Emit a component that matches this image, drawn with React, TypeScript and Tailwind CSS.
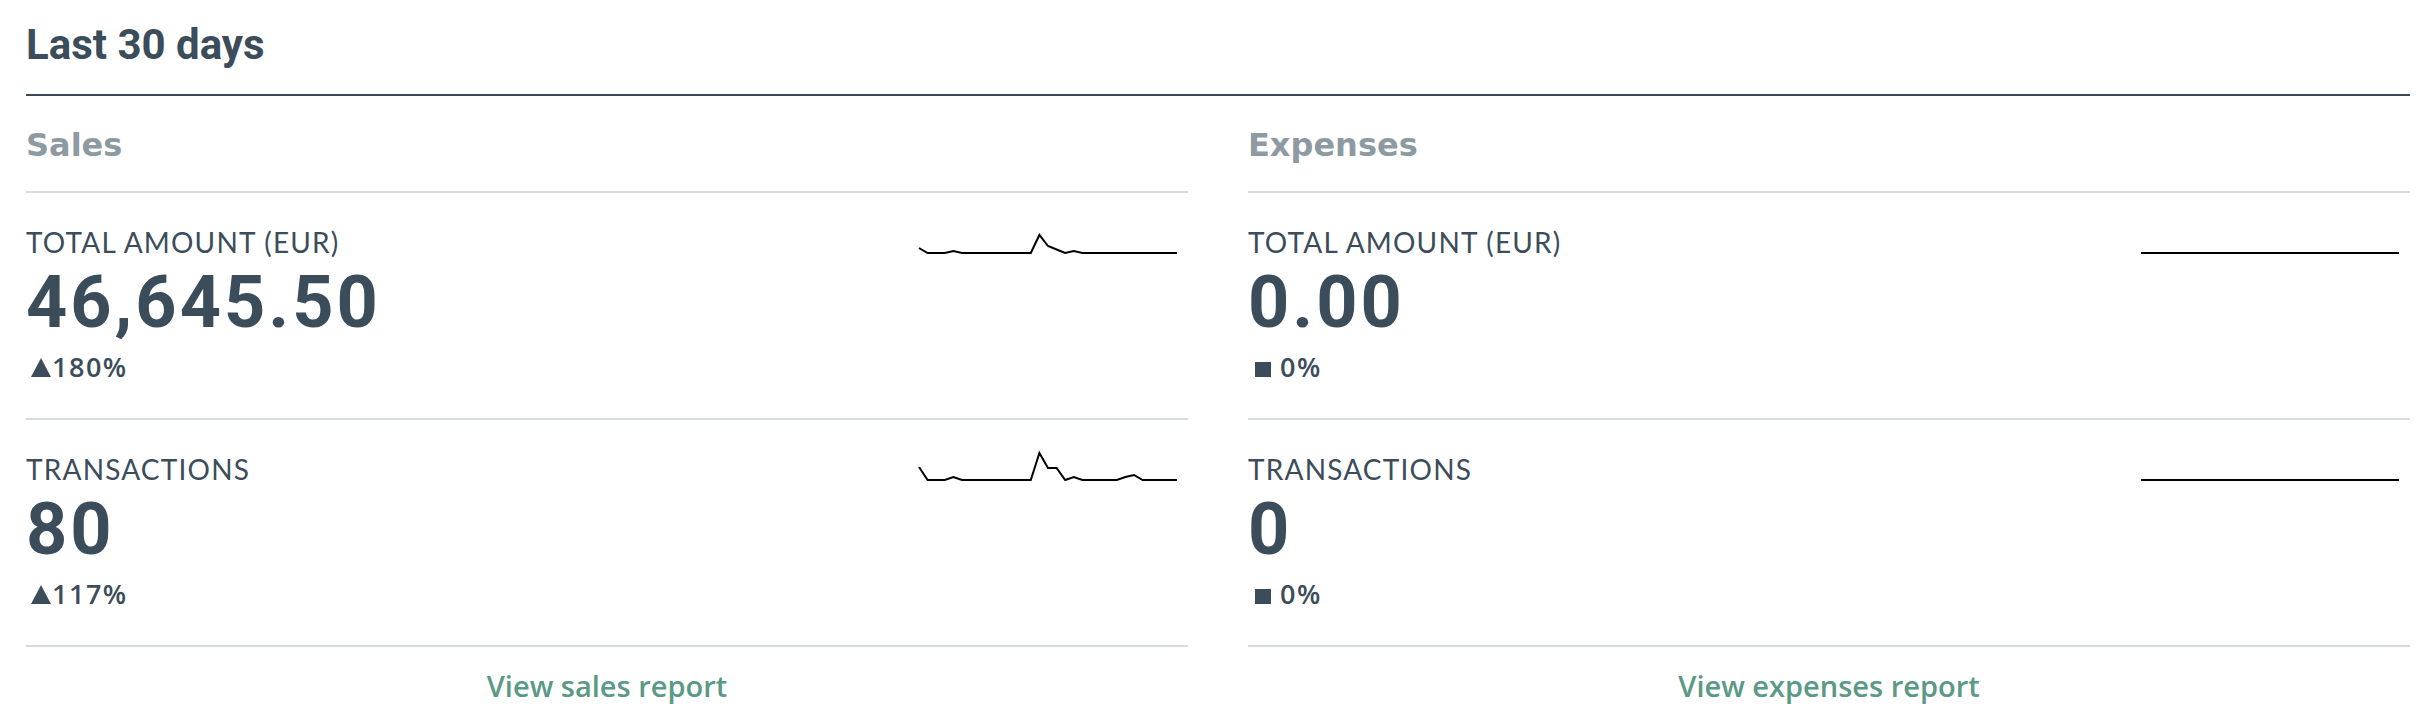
import React from "react";

const N = 31;
const W = 260;

function pts(offsets: number[]) {
  return offsets
    .map((o, i) => `${(1 + (i * (W - 2)) / (N - 1)).toFixed(2)},${30 - o}`)
    .join(" ");
}

const zeros = Array(N).fill(0);
const sales1 = [5, 0, 0, 0, 2, 0, 0, 0, 0, 0, 0, 0, 0, 0, 18, 7, 3.5, 0, 2, 0, 0, 0, 0, 0, 0, 0, 0, 0, 0, 0, 0];
const sales2 = [13, 0, 0, 0, 3, 0, 0, 0, 0, 0, 0, 0, 0, 0, 27, 12, 12, 0, 3, 0, 0, 0, 0, 0, 3, 5, 0, 0, 0, 0, 0];

function Spark({ data }: { data: number[] }) {
  return (
    <svg width={W} height="34" viewBox={`0 0 ${W} 34`} className="mr-[10px] shrink-0 block">
      <polyline points={pts(data)} fill="none" stroke="#000" strokeWidth="2" strokeLinejoin="miter" />
    </svg>
  );
}

function Indicator({ kind, text }: { kind: "up" | "flat"; text: string }) {
  return (
    <div className="mt-[14px] flex h-[27px] items-start">
      {kind === "up" ? (
        <svg width="20" height="19" viewBox="0 0 20 19" className="ml-[5px] mt-[5px] block">
          <polygon points="10,0 20,19 0,19" fill="#3b4c5a" />
        </svg>
      ) : (
        <div className="ml-[7px] mt-[9px] h-[15px] w-[16px] bg-[#3b4c5a]" />
      )}
      <span
        className={`font-['Open_Sans',sans-serif] text-[27px] leading-[27px] font-semibold tracking-[1.5px] ${
          kind === "up" ? "ml-[1px]" : "ml-[9px]"
        }`}
      >
        {text}
      </span>
    </div>
  );
}

function Row({
  label,
  value,
  kind,
  change,
  data,
}: {
  label: string;
  value: string;
  kind: "up" | "flat";
  change: string;
  data: number[];
}) {
  return (
    <div className="flex justify-between border-t-2 border-[#d7dbde] pt-[30px] pb-[38px]">
      <div className="pt-[5px]">
        <div className="font-['Lato',sans-serif] text-[28px] leading-[28px] tracking-[1.2px]">{label}</div>
        <div className="mt-[11px] font-['Roboto',sans-serif] text-[72px] leading-[72px] font-bold tracking-[3px]">
          {value}
        </div>
        <Indicator kind={kind} text={change} />
      </div>
      <Spark data={data} />
    </div>
  );
}

function Column({
  title,
  rows,
  link,
}: {
  title: string;
  rows: { label: string; value: string; kind: "up" | "flat"; change: string; data: number[] }[];
  link: string;
}) {
  return (
    <div>
      <h2 className="pt-[33px] pb-[30px] font-['DejaVu_Sans',sans-serif] text-[32px] leading-[32px] font-bold text-[#8e9aa2]">
        {title}
      </h2>
      {rows.map((r) => (
        <Row key={r.label} {...r} />
      ))}
      <div className="border-t-2 border-[#d7dbde] pt-[24px] text-center">
        <a href="#" className="font-['Open_Sans',sans-serif] text-[29px] leading-[29px] font-semibold text-[#5a9985]">
          {link}
        </a>
      </div>
    </div>
  );
}

export default function App() {
  return (
    <div className="min-h-[712px] w-[2420px] bg-white pt-[24px] pl-[26px] pr-[10px] font-['Lato',sans-serif] text-[#3b4c5a]">
      <h1 className="font-['Roboto',sans-serif] text-[42px] leading-[42px] font-bold">Last 30 days</h1>
      <div className="mt-[28px] h-[2px] bg-[#3a4a58]" />
      <div className="grid grid-cols-2 gap-[60px]">
        <Column
          title="Sales"
          link="View sales report"
          rows={[
            { label: "TOTAL AMOUNT (EUR)", value: "46,645.50", kind: "up", change: "180%", data: sales1 },
            { label: "TRANSACTIONS", value: "80", kind: "up", change: "117%", data: sales2 },
          ]}
        />
        <Column
          title="Expenses"
          link="View expenses report"
          rows={[
            { label: "TOTAL AMOUNT (EUR)", value: "0.00", kind: "flat", change: "0%", data: zeros },
            { label: "TRANSACTIONS", value: "0", kind: "flat", change: "0%", data: zeros },
          ]}
        />
      </div>
    </div>
  );
}
